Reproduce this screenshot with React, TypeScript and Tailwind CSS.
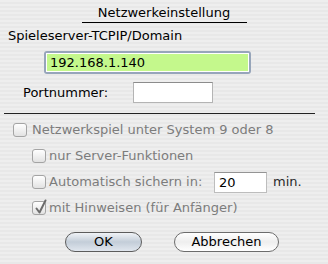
import React from 'react';

function Checkbox({ checked = false }: { checked?: boolean }) {
  return (
    <div className="relative w-[14px] h-[14px] shrink-0 rounded-[3px] border border-[#a4a4a4] bg-linear-to-b from-white to-[#e2e2e2]">
      {checked && (
        <svg className="absolute left-[1px] top-[-3px]" width="14" height="16" viewBox="0 0 14 16">
          <path d="M2.5 9.5 L5.5 13.5 L11.5 1.5" fill="none" stroke="#6c6c6c" strokeWidth="2" strokeLinecap="round" strokeLinejoin="round" />
        </svg>
      )}
    </div>
  );
}

export default function App() {
  return (
    <div className="w-[328px] h-[264px] overflow-hidden bg-[repeating-linear-gradient(to_bottom,#eeeeee_0px,#eeeeee_2px,#e8e8e8_2px,#e8e8e8_4px)] text-[13px] text-black font-['DejaVu_Sans',sans-serif]">
      {/* Title */}
      <div className="mx-auto w-[165px] h-[23px] border-b border-black text-center leading-[15px] pt-[5px]">
        Netzwerkeinstellung
      </div>

      {/* Server */}
      <div className="mt-[5px] pl-[8px] leading-[15px]">Spieleserver-TCPIP/Domain</div>
      <div className="mt-[8px] ml-[44px] w-[207px] h-[23px] p-[2px] rounded-[3px] bg-[#97a5ba]">
        <div className="h-full border border-white bg-[#c4f88c] pl-[3px] leading-[17px]">192.168.1.140</div>
      </div>

      {/* Port */}
      <div className="mt-[8px] flex items-center">
        <span className="pl-[23px] w-[133px] leading-[15px]">Portnummer:</span>
        <div className="w-[80px] h-[21px] bg-white border border-[#b4b4b4] border-t-[#8c8c8c]" />
      </div>

      <div className="mt-[10px] ml-[4px] w-[311px] h-px bg-[#222]" />

      {/* Options */}
      <div className="mt-[3px] text-[#7c7c7c]">
        <div className="h-[26px] flex items-center gap-[5px] pl-[13px]">
          <Checkbox />
          <span>Netzwerkspiel unter System 9 oder 8</span>
        </div>
        <div className="h-[26px] flex items-center gap-[3px] pl-[32px]">
          <Checkbox />
          <span>nur Server-Funktionen</span>
        </div>
        <div className="h-[26px] flex items-center gap-[3px] pl-[32px]">
          <Checkbox />
          <span className="w-[162px] shrink-0 whitespace-nowrap">Automatisch sichern in:</span>
          <div className="w-[53px] h-[21px] shrink-0 bg-white border border-[#bdbdbd] border-t-[#949494] pl-[4px] leading-[19px] text-black">20</div>
          <span className="ml-[3px] text-[#2a2a2a]">min.</span>
        </div>
        <div className="h-[26px] flex items-center gap-[3px] pl-[32px]">
          <Checkbox checked />
          <span>mit Hinweisen (für Anfänger)</span>
        </div>
      </div>

      {/* Buttons */}
      <div className="mt-[11px] flex">
        <button className="ml-[65px] w-[77px] h-[20px] rounded-full border border-[#5c5c5c] bg-linear-to-b from-[#f0f3f7] via-[#c3cdd8] to-[#e0e6ee] leading-[18px] text-black">
          OK
        </button>
        <button className="ml-[32px] w-[105px] h-[20px] rounded-full border border-[#6c6c6c] bg-linear-to-b from-white via-[#eeeeee] to-white leading-[18px] text-black">
          Abbrechen
        </button>
      </div>
    </div>
  );
}
